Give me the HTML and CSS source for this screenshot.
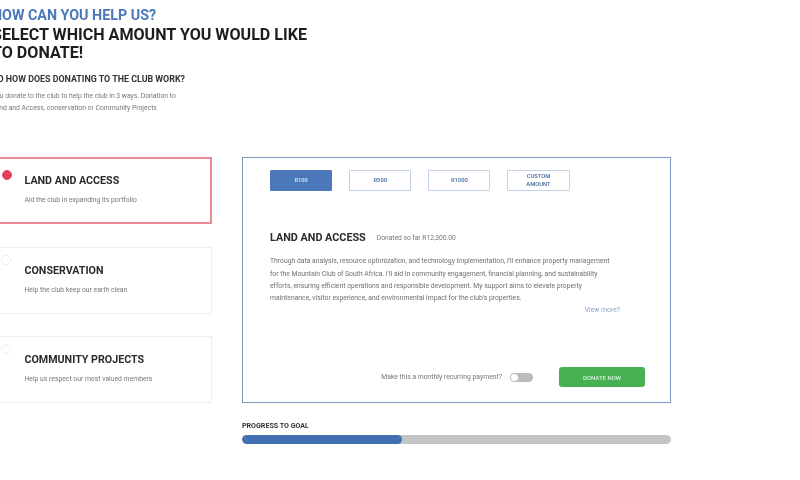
FILE: index.html
```html
<!DOCTYPE html>
<html lang="en">
<head>
    <meta charset="UTF-8">
    <meta name="viewport" content="width=device-width, initial-scale=1.0">
    <title>Donate</title>
    <link rel="stylesheet" href="styles.css">
</head>
<body>

    <div class="page">
        <p class="eyebrow">HOW CAN YOU HELP US?</p>
        <h1>SELECT WHICH AMOUNT YOU WOULD LIKE<br>TO DONATE!</h1>
        <h2>SO HOW DOES DONATING TO THE CLUB WORK?</h2>
        <p class="intro">You donate to the club to help the club in 3 ways. Donation to<br>Land and Access, conservation or Community Projects</p>

        <div class="columns">
            <div class="options">
                <div class="option selected">
                    <span class="radio"></span>
                    <h3>LAND AND ACCESS</h3>
                    <p>Aid the club in expanding its portfolio</p>
                </div>
                <div class="option">
                    <span class="radio"></span>
                    <h3>CONSERVATION</h3>
                    <p>Help the club keep our earth clean</p>
                </div>
                <div class="option">
                    <span class="radio"></span>
                    <h3>COMMUNITY PROJECTS</h3>
                    <p>Help us respect our most valued members</p>
                </div>
            </div>

            <div class="right">
                <div class="panel">
                    <div class="amounts">
                        <button class="amount active">R100</button>
                        <button class="amount">R500</button>
                        <button class="amount">R1000</button>
                        <button class="amount">CUSTOM<br>AMOUNT</button>
                    </div>
                    <div class="heading">
                        <h3>LAND AND ACCESS</h3>
                        <span>Donated so far R12,300.00</span>
                    </div>
                    <p class="text">Through data analysis, resource optimization, and technology implementation, I'll enhance property management<br>for the Mountain Club of South Africa. I'll aid in community engagement, financial planning, and sustainability<br>efforts, ensuring efficient operations and responsible development. My support aims to elevate property<br>maintenance, visitor experience, and environmental impact for the club's properties.</p>
                    <a class="more">View more?</a>
                    <div class="actions">
                        <span class="recurring">Make this a monthly recurring payment?</span>
                        <span class="switch"></span>
                        <button class="donate">DONATE NOW</button>
                    </div>
                </div>
                <div class="progress-label">PROGRESS TO GOAL</div>
                <div class="progress"><div class="progress-fill"></div></div>
            </div>
        </div>
    </div>

</body>
</html>
```

FILE: styles.css
```css
body {
    font-family: "Roboto", "Liberation Sans", sans-serif;
    margin: 0;
    background-color: #fff;
    color: #1d1d1f;
    overflow: hidden;
}
.page {
    width: 700px;
    margin-left: -8px;
    padding-top: 6px;
    filter: blur(0.6px);
}
.eyebrow {
    margin: 0;
    font-size: 14.3px;
    line-height: 18px;
    font-weight: 700;
    color: #4a78bb;
}
h1 {
    margin: 2px 0 0;
    font-size: 16.1px;
    line-height: 18px;
    font-weight: 700;
}
h2 {
    margin: 12px 0 0;
    font-size: 8.9px;
    line-height: 10px;
    font-weight: 700;
    color: #333;
}
.intro {
    margin: 6px 0 0;
    font-size: 6.8px;
    line-height: 12.2px;
    color: #777;
}
.columns {
    display: flex;
    gap: 30px;
    margin-top: 43px;
}
.options {
    width: 220px;
    display: flex;
    flex-direction: column;
    gap: 22.5px;
}
.option {
    position: relative;
    box-sizing: border-box;
    height: 67px;
    padding: 16px 0 0 31.5px;
    border: 1px solid #eee;
}
.option.selected {
    border: 2px solid #e88a98;
    padding: 15px 0 0 30.5px;
}
.option h3 {
    margin: 0;
    font-size: 10.7px;
    line-height: 14px;
    font-weight: 700;
    color: #2b2b2e;
}
.option p {
    margin: 7px 0 0;
    font-size: 6.8px;
    line-height: 10px;
    color: #777;
}
.radio {
    position: absolute;
    left: 8px;
    top: 7px;
    width: 10px;
    height: 10px;
    box-sizing: border-box;
    border: 1px solid #eee;
    border-radius: 50%;
}
.selected .radio {
    left: 8px;
    top: 11px;
    background-color: #e2405a;
    border-color: #e2405a;
}
.right {
    width: 429px;
}
.panel {
    box-sizing: border-box;
    height: 246px;
    padding: 12px 25px 0 27px;
    border: 1.5px solid #7f97c1;
    display: flex;
    flex-direction: column;
}
.amounts {
    display: flex;
    gap: 16.8px;
}
.amount {
    width: 62.3px;
    height: 21px;
    padding: 0;
    font-family: inherit;
    font-size: 5.8px;
    line-height: 7.5px;
    font-weight: 500;
    color: #47689f;
    background-color: #fff;
    border: 1px solid #c3d1e7;
    border-radius: 1px;
}
.amount.active {
    color: #dbe6f5;
    background-color: #4a78bb;
    border-color: #4a78bb;
}
.heading {
    display: flex;
    align-items: center;
    gap: 11px;
    margin-top: 40px;
}
.heading h3 {
    margin: 0;
    font-size: 10.8px;
    line-height: 14px;
    font-weight: 700;
    color: #2b2b2e;
}
.heading span {
    font-size: 6.7px;
    color: #777;
}
.text {
    margin: 10px 0 0;
    font-size: 6.8px;
    line-height: 12.2px;
    color: #6f6f6f;
    white-space: nowrap;
}
.more {
    align-self: flex-end;
    margin: 1px 25px 0 0;
    font-size: 6.8px;
    line-height: 10px;
    color: #8ba3cc;
}
.actions {
    display: flex;
    align-items: center;
    justify-content: flex-end;
    margin-top: 52px;
}
.recurring {
    font-size: 6.8px;
    color: #777;
}
.switch {
    position: relative;
    width: 23px;
    height: 9px;
    margin: 0 26px 0 8px;
    border-radius: 5px;
    background-color: #bcbcbc;
}
.switch::after {
    content: "";
    position: absolute;
    left: 1px;
    top: 1px;
    width: 7px;
    height: 7px;
    border-radius: 50%;
    background-color: #fff;
}
.donate {
    width: 86px;
    height: 20px;
    padding: 0;
    font-family: inherit;
    font-size: 6px;
    font-weight: 500;
    color: #d8f0da;
    background-color: #45b152;
    border: none;
    border-radius: 3px;
}
.progress-label {
    margin-top: 18px;
    font-size: 7.1px;
    line-height: 9px;
    font-weight: 700;
    color: #333;
}
.progress {
    height: 9px;
    margin-top: 5px;
    border-radius: 5px;
    background-color: #c4c4c4;
    overflow: hidden;
}
.progress-fill {
    width: 160px;
    height: 100%;
    border-radius: 5px;
    background-color: #4270b3;
}
```
